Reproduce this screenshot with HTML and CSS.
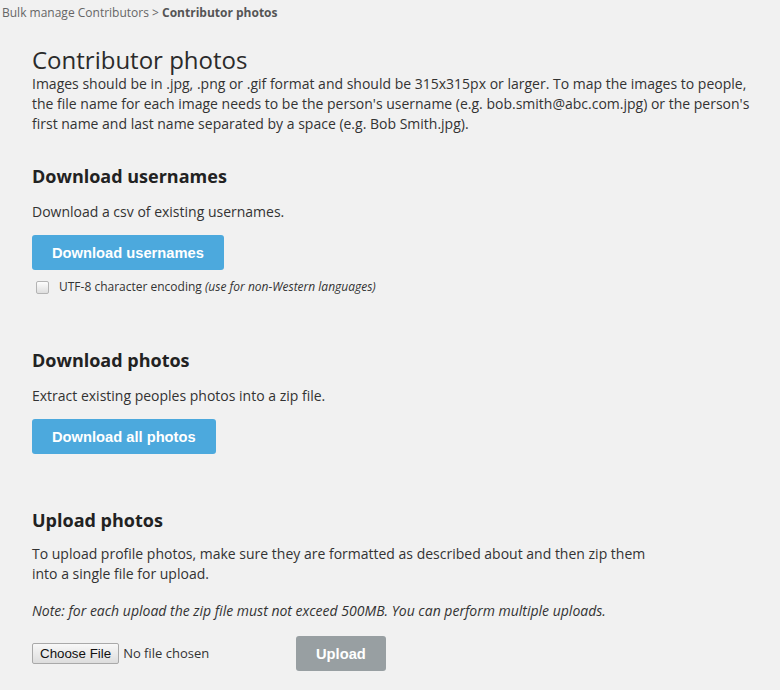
FILE: index.html
```html
<!DOCTYPE html>
<html lang="en">
<head>
  <meta charset="UTF-8">
  <title>Contributor photos</title>
  <link rel="stylesheet" href="styles.css">
</head>
<body>
  <div class="breadcrumb">Bulk manage Contributors &gt; <strong>Contributor photos</strong></div>
  <div class="page">
    <h1>Contributor photos</h1>
    <p>Images should be in .jpg, .png or .gif format and should be 315x315px or larger. To map the images to people, the file name for each image needs to be the person's username (e.g. bob.smith@abc.com.jpg) or the person's first name and last name separated by a space (e.g. Bob Smith.jpg).</p>

    <section class="block">
      <h2>Download usernames</h2>
      <p class="lead">Download a csv of existing usernames.</p>
      <button type="button" class="btn">Download usernames</button>
      <label class="check-row">
        <input type="checkbox" name="utf8">
        <span>UTF-8 character encoding <em>(use for non-Western languages)</em></span>
      </label>
    </section>

    <section class="block block-photos">
      <h2>Download photos</h2>
      <p class="lead">Extract existing peoples photos into a zip file.</p>
      <button type="button" class="btn">Download all photos</button>
    </section>

    <section class="block block-upload">
      <h2>Upload photos</h2>
      <p class="lead narrow">To upload profile photos, make sure they are formatted as described about and then zip them into a single file for upload.</p>
      <p class="note">Note: for each upload the zip file must not exceed 500MB. You can perform multiple uploads.</p>
      <form class="upload-row" action="#" method="post">
        <input type="file" name="photos" class="file-input">
        <button type="submit" class="btn btn-disabled" disabled>Upload</button>
      </form>
    </section>
  </div>
</body>
</html>
```

FILE: styles.css
```css
html, body {
  margin: 0;
  padding: 0;
  background: #f1f1f1;
  color: #333;
  font-family: 'Open Sans', Arial, sans-serif;
}

.breadcrumb {
  height: 26px;
  line-height: 26px;
  padding-left: 2px;
  font-size: 12px;
  color: #666;
}
.breadcrumb strong {
  color: #555;
  font-weight: 700;
}

.page {
  padding: 0 20px 0 32px;
}

h1 {
  margin: 20px 0 0;
  font-size: 24px;
  line-height: 28px;
  font-weight: 400;
  color: #2b2b2b;
}

p {
  margin: 0;
  font-size: 14px;
  line-height: 20px;
}

h2 {
  margin: 0;
  font-size: 18px;
  line-height: 24px;
  font-weight: 700;
  color: #222;
}

.block {
  margin-top: 30px;
}
.block-photos {
  margin-top: 53px;
}
.block-upload {
  margin-top: 54px;
}

.lead {
  margin-top: 14px;
}
.narrow {
  max-width: 630px;
  margin-top: 12px;
}
.note {
  margin-top: 17px;
  font-style: italic;
}

.btn {
  display: block;
  height: 35px;
  margin-top: 13px;
  padding: 0 20px;
  border: none;
  border-radius: 3px;
  background: #4ca9dd;
  color: #fff;
  font-family: 'Liberation Sans', Arial, sans-serif;
  font-size: 14.7px;
  font-weight: 700;
  cursor: pointer;
}
.btn-disabled {
  margin-top: 0;
  background: #989fa2;
  cursor: default;
}

.check-row {
  display: flex;
  align-items: center;
  gap: 10px;
  margin-top: 9px;
  padding-left: 4px;
  font-size: 12px;
  line-height: 16px;
  color: #333;
}
.check-row input {
  appearance: none;
  width: 13px;
  height: 13px;
  margin: 0;
  border: 1px solid #b4b4b4;
  border-radius: 2px;
  background: linear-gradient(#fdfdfd, #dedede);
}

.upload-row {
  display: flex;
  align-items: center;
  gap: 10px;
  margin-top: 15px;
}
.file-input {
  width: 254px;
  font-family: 'Open Sans', Arial, sans-serif;
  font-size: 13px;
  color: #333;
}
.file-input::file-selector-button {
  height: 21px;
  margin-right: 4px;
  padding: 0 7px;
  border: 1px solid #a9a9a9;
  border-radius: 2px;
  background: linear-gradient(#f8f8f8, #dddddd);
  color: #111;
  font-family: 'Liberation Sans', Arial, sans-serif;
  font-size: 13.33px;
}
```
